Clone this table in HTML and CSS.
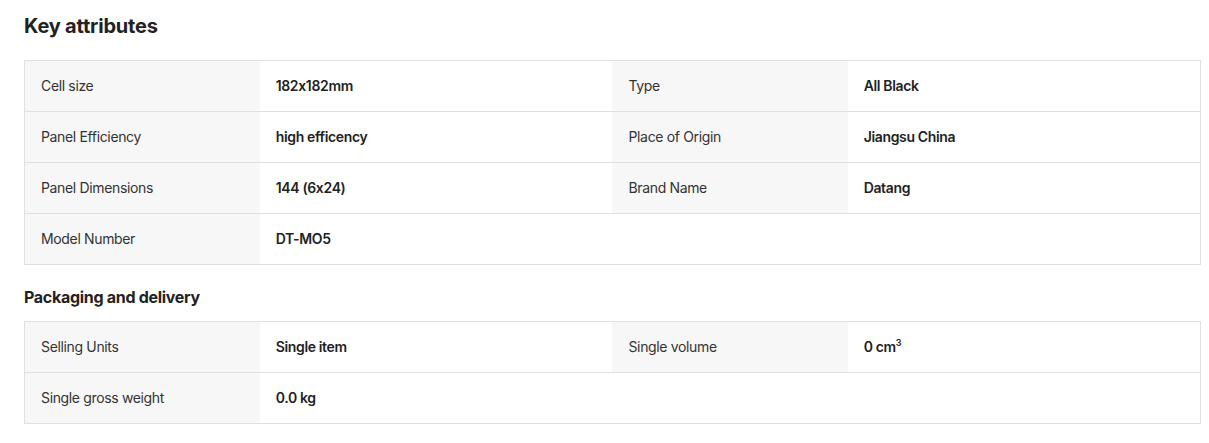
FILE: index.html
```html
<!DOCTYPE html>
<html lang="en">
<head>
    <meta charset="UTF-8">
    <title>Key attributes</title>
    <link rel="stylesheet" href="styles.css">
</head>
<body>
    <div class="attributes">
        <h2 class="title">Key attributes</h2>

        <!-- Main attributes -->
        <table class="attr-table">
            <tr>
                <td class="attr-name">Cell size</td>
                <td class="attr-value">182x182mm</td>
                <td class="attr-name">Type</td>
                <td class="attr-value">All Black</td>
            </tr>
            <tr>
                <td class="attr-name">Panel Efficiency</td>
                <td class="attr-value">high efficency</td>
                <td class="attr-name">Place of Origin</td>
                <td class="attr-value">Jiangsu China</td>
            </tr>
            <tr>
                <td class="attr-name">Panel Dimensions</td>
                <td class="attr-value">144 (6x24)</td>
                <td class="attr-name">Brand Name</td>
                <td class="attr-value">Datang</td>
            </tr>
            <tr>
                <td class="attr-name">Model Number</td>
                <td class="attr-value">DT-MO5</td>
                <td></td>
                <td></td>
            </tr>
        </table>

        <h3 class="subtitle">Packaging and delivery</h3>

        <!-- Packaging -->
        <table class="attr-table">
            <tr>
                <td class="attr-name">Selling Units</td>
                <td class="attr-value">Single item</td>
                <td class="attr-name">Single volume</td>
                <td class="attr-value">0 cm<sup>3</sup></td>
            </tr>
            <tr>
                <td class="attr-name">Single gross weight</td>
                <td class="attr-value">0.0 kg</td>
                <td></td>
                <td></td>
            </tr>
        </table>
    </div>
</body>
</html>
```

FILE: styles.css
```css
body {
    margin: 0;
    padding: 0;
    font-family: Inter, "Noto Sans", sans-serif;
    font-feature-settings: "calt" 0;
    background-color: #fff;
    color: #222;
}

.attributes {
    padding: 12px 8px 12px 24px;
}

.title {
    margin: 0 0 20px;
    font-size: 20px;
    line-height: 28px;
    font-weight: 700;
    letter-spacing: -0.2px;
    color: #222;
}

.subtitle {
    margin: 20px 0 12px;
    font-size: 16px;
    line-height: 24px;
    font-weight: 700;
    letter-spacing: -0.3px;
    color: #222;
}

.attr-table {
    width: 100%;
    border-collapse: collapse;
    table-layout: fixed;
    border: 1px solid #e0e0e0;
}

.attr-table td {
    height: 51px;
    padding: 0 16px 2px;
    border-bottom: 1px solid #e0e0e0;
    font-size: 14px;
    letter-spacing: -0.35px;
    box-sizing: border-box;
}

.attr-table td:nth-child(odd) {
    width: 20%;
}

.attr-table td:nth-child(even) {
    width: 30%;
}

.attr-name {
    background-color: #f7f7f7;
    color: #333;
}

.attr-value {
    font-weight: 600;
    color: #222;
}

.attr-value sup {
    font-size: 9px;
    line-height: 0;
}
```
